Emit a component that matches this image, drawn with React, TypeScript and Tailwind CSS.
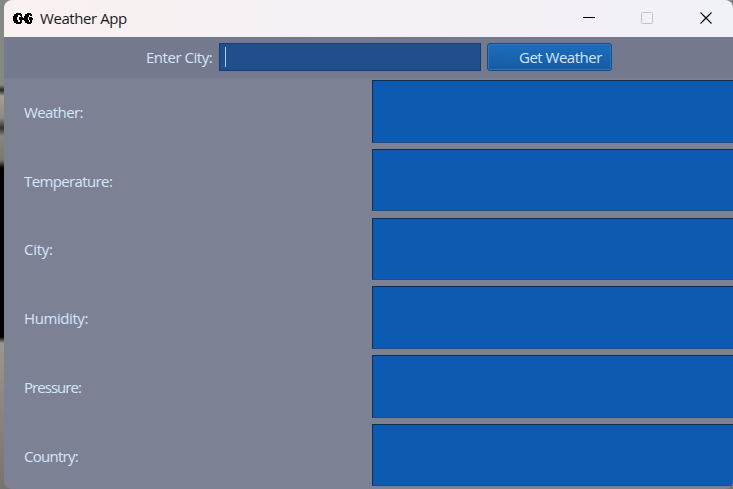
import React from "react";

const rows = [
  { label: "Weather:", height: "h-[69px]", box: "h-[63px]", text: "leading-[64px] tracking-[-0.6px]" },
  { label: "Temperature:", height: "h-[69px]", box: "h-[62px]", text: "leading-[64px] tracking-[-0.62px]" },
  { label: "City:", height: "h-[68px]", box: "h-[62px]", text: "leading-[62px] tracking-[-0.3px]" },
  { label: "Humidity:", height: "h-[69px]", box: "h-[63px]", text: "leading-[64px] tracking-[-0.42px]" },
  { label: "Pressure:", height: "h-[69px]", box: "h-[63px]", text: "leading-[64px] tracking-[-0.95px]" },
  { label: "Country:", height: "h-[65px]", box: "h-[62px]", text: "leading-[64px] tracking-[-0.72px]" },
];

function Logo() {
  return (
    <svg className="ml-[9px] h-[13px] w-5 shrink-0" viewBox="0 0 20 13" fill="none">
      <path d="M3 1h5v1h1v2H7V3H5v2H4v3h1v2h2V9h2v2H8v1H3v-1H1V9H0V4h1V2h2zM14 1h4v1h1v2h-2V3h-1v2h-1v3h1v2h1V9h2v2h-1v1h-4v-1h-2V9h-1V4h1V2h2z" fill="#000" />
      <path d="M6 5h2V4h1v1h1v1h2v2H9v1H7V8H6zM16 5h3v1h1v2h-1v1h-2V8h-1z" fill="#000" />
    </svg>
  );
}

function TitleBar() {
  return (
    <header className="flex h-[37px] shrink-0 items-center bg-gradient-to-r from-[#f9f1f1] to-[#f1f1f8]">
      <Logo />
      <h1 className="mb-[2px] ml-[7px] grow text-[15px] leading-5 tracking-[-0.43px] text-[#1b191b]">Weather App</h1>
      <svg className="h-[37px] w-[154px] shrink-0" viewBox="0 0 154 37" fill="none">
        <path d="M4 17.5h12" stroke="#000" />
        <rect x="62.5" y="12.5" width="11" height="11" rx="1" stroke="#c3c2c7" />
        <path d="m121.5 12.5 11 11m0-11-11 11" stroke="#000" strokeWidth="1.2" />
      </svg>
    </header>
  );
}

export default function App() {
  return (
    <div className="flex h-[489px] w-[733px] overflow-hidden bg-[linear-gradient(to_bottom,#858984_0,#858984_85px,#242522_90px,#a09f98_96px,#8a8b82_118px,#30322d_128px,#85867e_136px,#77796f_160px,#000_168px,#000_337px,#99978f_343px,#84807c_430px,#777372_489px)] pl-1 font-['Open_Sans','Noto_Sans',sans-serif]">
      <div className="flex w-[729px] flex-col overflow-hidden rounded-lg bg-[#7d8194]">
        <TitleBar />
        <div className="flex h-[41px] shrink-0 items-start bg-[#74798d] pt-[6px]">
          <label className="ml-[142px] w-[73px] text-[15px] leading-[29px] tracking-[-0.47px] whitespace-nowrap text-[#d5e7fc]">Enter City:</label>
          <div className="flex h-[28px] w-[262px] items-center border border-[#143e75] bg-[#214f8c] pl-[5px]">
            <span className="h-5 w-px bg-[#a6d0ff]" />
          </div>
          <button className="ml-[6px] h-[28px] w-[125px] rounded-[3px] border border-[#174c86] bg-gradient-to-b from-[#1d6dbd] to-[#165ba3] pl-[31px] text-left text-[15px] leading-[27px] tracking-[-0.5px] whitespace-nowrap text-[#d5e7fc] shadow-[inset_0_0_0_1px_#2d78bd]">Get Weather</button>
        </div>
        <main className="flex flex-col pt-[2px]">
          {rows.map((row) => (
            <section key={row.label} className={`flex shrink-0 items-start ${row.height}`}>
              <div className={`w-[368px] shrink-0 pl-5 text-[15px] text-[#d5e7fc] ${row.text}`}>{row.label}</div>
              <div className={`grow border-y border-l border-t-[#102c51] border-b-[#224b7e] border-l-[#102c51] bg-[#0d5ab2] ${row.box}`} />
            </section>
          ))}
        </main>
      </div>
    </div>
  );
}
